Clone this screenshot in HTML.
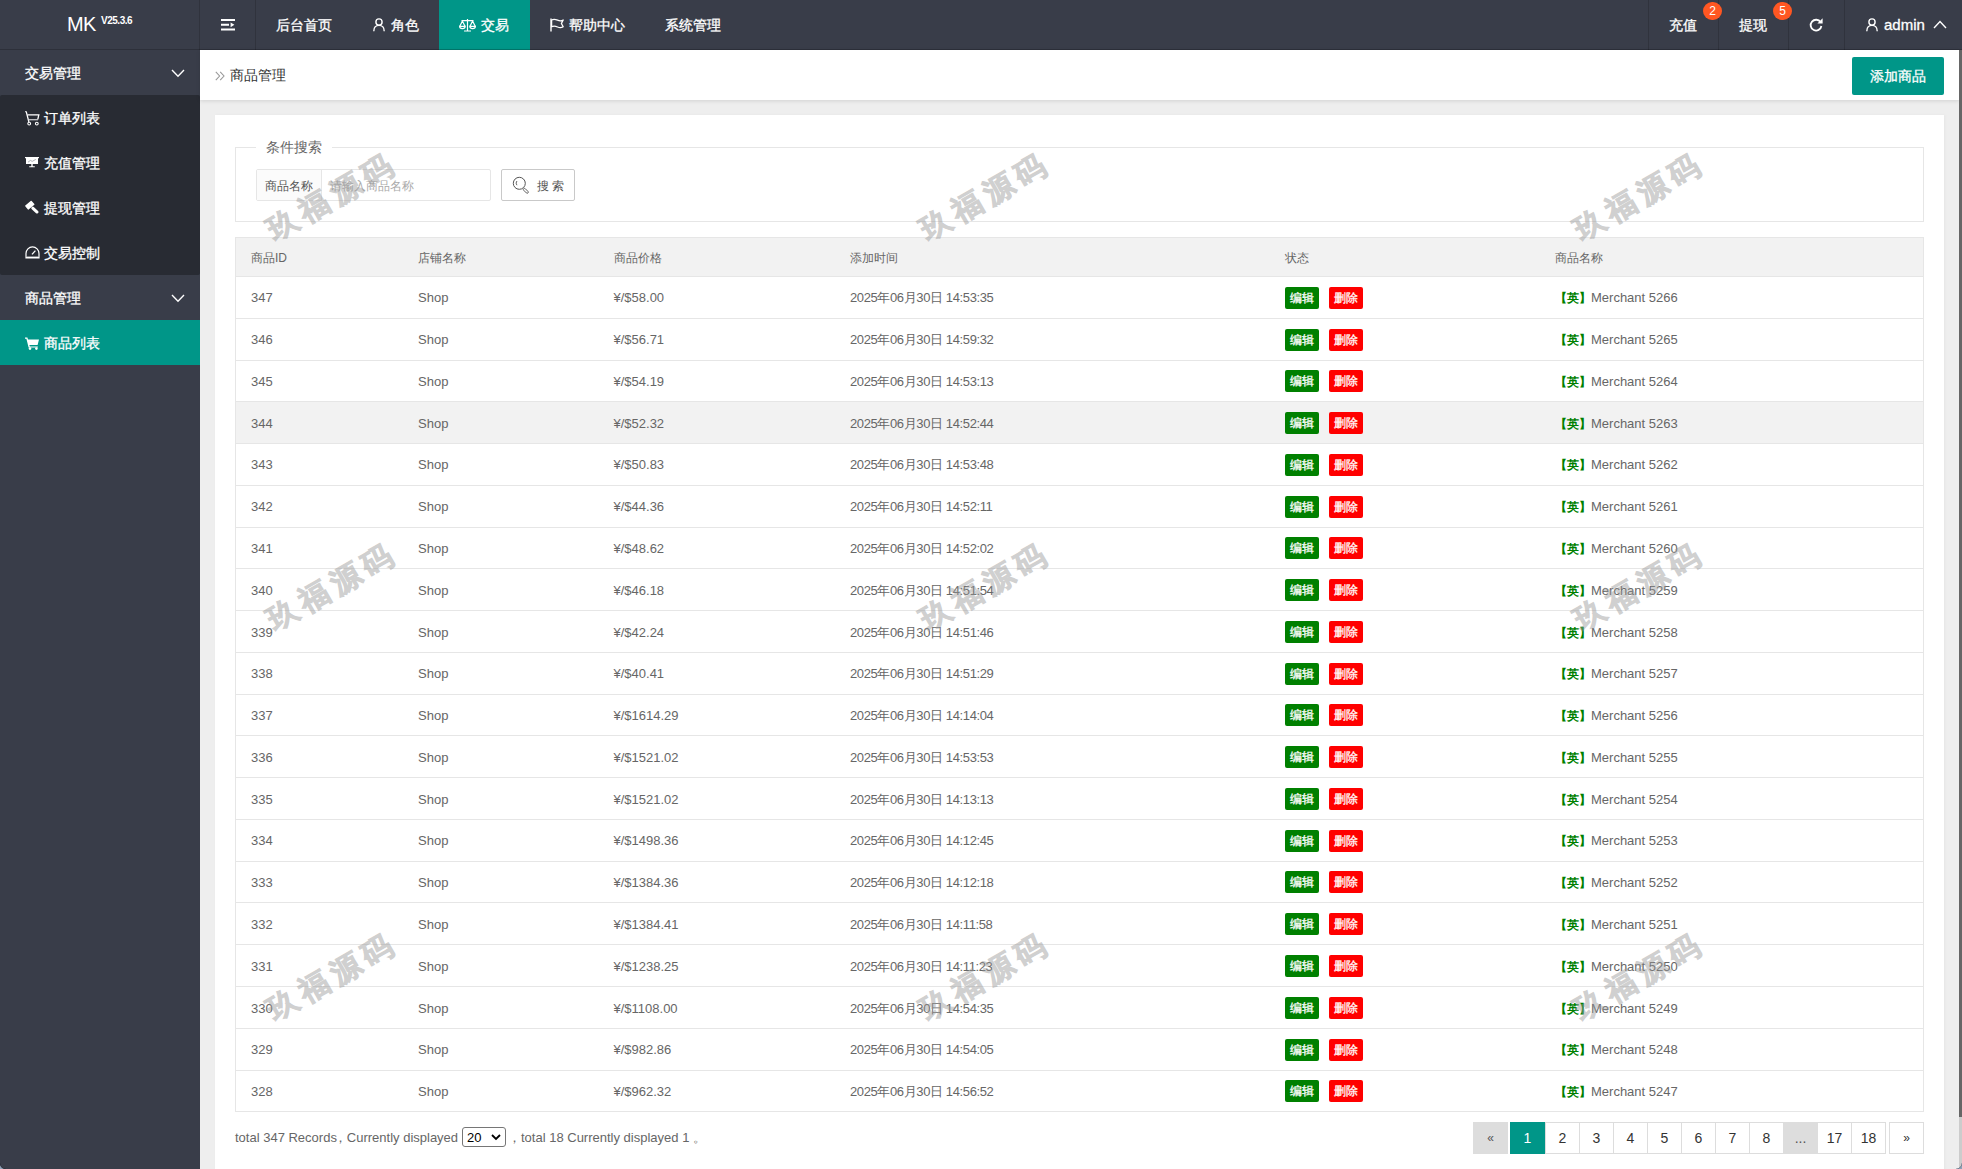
<!DOCTYPE html>
<html lang="zh"><head><meta charset="utf-8"><title>商品管理</title>
<style>
*{box-sizing:border-box;margin:0;padding:0}
html,body{width:1962px;height:1169px;overflow:hidden}
body{position:relative;background:#eeeeee;font-family:"Liberation Sans",sans-serif;font-size:14px;color:#666;-webkit-font-smoothing:antialiased}
i,em,b,u{font-style:normal;font-weight:normal;text-decoration:none}
.abs{position:absolute}
#hdr{position:absolute;left:0;top:0;width:1962px;height:50px;background:#393d49}
#side{position:absolute;left:0;top:50px;width:200px;height:1119px;background:#393d49}
.sep{position:absolute;top:0;width:1px;height:50px;background:#30333d}
.nav{position:absolute;top:0;height:50px;line-height:50px;color:#fff;font-size:14px;white-space:nowrap;-webkit-text-stroke:.3px #fff}
.nav svg{position:absolute}
#logo{position:absolute;left:0;top:0;width:200px;height:50px;color:#fff}
#logo .mk{position:absolute;left:67px;top:11px;font-size:20px;line-height:26px;letter-spacing:-0.6px}
#logo .ver{position:absolute;left:101px;top:15px;font-size:10px;line-height:12px;font-weight:bold;letter-spacing:-0.480px}
.badge{position:absolute;width:19px;height:18px;border-radius:9px;background:#ff5722;color:#fff;font-size:12px;line-height:18px;text-align:center}
.sitem{position:absolute;left:0;width:200px;height:45px;line-height:45px;color:#fff;font-size:14px;white-space:nowrap;-webkit-text-stroke:.3px #fff}
.sitem span{position:absolute;top:1px}
.sitem svg{position:absolute}
#child{position:absolute;left:0;top:45px;width:200px;height:180px;background:#282b33;border-radius:2px}
#crumb{position:absolute;left:200px;top:50px;width:1759px;height:50px;background:#fff;box-shadow:0 1px 4px rgba(0,0,0,.12)}
#card{position:absolute;left:215px;top:115px;width:1729px;height:1060px;background:#fff;box-shadow:1px 0 3px rgba(0,0,0,.04)}
#addbtn{position:absolute;left:1852px;top:57px;width:92px;height:38px;border-radius:2px;background:#009688;color:#fff;font-size:14px;line-height:38px;text-align:center;-webkit-text-stroke:.3px #fff}
#fs{position:absolute;left:235px;top:147px;width:1689px;height:75px;border:1px solid #e6e6e6}
#lg{position:absolute;left:256px;top:137px;width:76px;height:20px;background:#fff;font-size:14px;line-height:20px;color:#666;padding-left:10px}
#ig{position:absolute;left:256px;top:169px;width:235px;height:32px;border:1px solid #e6e6e6;border-radius:2px;background:#fff}
#igl{position:absolute;left:0;top:0;width:65px;height:30px;background:#fbfbfb;border-right:1px solid #e6e6e6;font-size:12px;line-height:32px;text-align:center;color:#555}
#igp{position:absolute;left:73px;top:1px;height:30px;line-height:30px;font-size:12px;color:#aaa}
#sbtn{position:absolute;left:501px;top:169px;width:74px;height:32px;border:1px solid #c9c9c9;border-radius:2px;background:#fff;font-size:12px;line-height:30px;color:#555}
#thead{position:absolute;left:235px;top:237px;width:1689px;height:40px;background:#f2f2f2;border:1px solid #e6e6e6;font-size:12px;color:#666}
#thead span{position:absolute;top:1px;line-height:38px;white-space:nowrap}
#tl,#tr{position:absolute;top:237px;width:1px;height:875px;background:#e6e6e6}
#tl{left:235px}#tr{left:1923px}
.tr{position:absolute;left:236px;width:1687px;border-bottom:1px solid #e6e6e6;font-size:13px;color:#666;white-space:nowrap}
.tr.hov{background:#f2f2f2}
.ln{position:absolute;left:0;width:100%;height:20px}.c{position:absolute;top:0;height:20px;line-height:20px}
.c1{left:15px}.c2{left:182px}.c3{left:377.5px}.c4{left:614px}.c5{left:1049px}.c6{left:1319px}
.c4{letter-spacing:-0.38px}.c4 i{display:inline-block;width:12.620px;white-space:nowrap;font-size:13px;line-height:1}
.be,.bd{position:absolute;top:-1px;width:34px;height:22px;border-radius:2px;color:#fff;font-size:12px;line-height:22px;text-align:center;-webkit-text-stroke:.3px #fff}
.be{background:#008000;left:0}
.bd{background:#ff0000;left:44px}
.c6 em{display:inline-block;width:36px;white-space:nowrap;color:#008000;font-size:12px;font-weight:bold;line-height:1}
#pinfo span{position:absolute;top:0}#pinfo{position:absolute;left:235px;top:1128px;height:20px;line-height:20px;font-size:13px;color:#666;white-space:nowrap}
#sel{position:absolute;left:462px;top:1127px;width:44px;height:20px;border:1px solid #767676;border-radius:3px;background:#fff;font-size:13px;color:#000;line-height:20px;padding-left:4px}
.pg{position:absolute;top:1122px;height:32px;border:1px solid #ddd;background:#fff;color:#333;font-size:14px;line-height:30px;text-align:center}
.wm{position:absolute;width:200px;height:40px;margin-left:-100px;margin-top:-20px;line-height:40px;text-align:center;font-size:30px;font-weight:bold;color:#999;-webkit-text-stroke:.9px #999;opacity:.45;letter-spacing:6px;text-indent:6px;transform:rotate(-30deg);white-space:nowrap;pointer-events:none}
#sb{position:absolute;left:1959px;top:50px;width:3px;height:1119px;background:#ccc}
#sbt{position:absolute;left:1959px;top:50px;width:3px;height:1067px;background:#666}

</style></head><body>
<div id="hdr">
  <div id="logo"><span class="mk">MK</span><span class="ver">V25.3.6</span></div>
  <div class="sep" style="left:199px"></div>
  <div class="sep" style="left:255px"></div>
  <div class="sep" style="left:1648px"></div>
  <div class="sep" style="left:1718px"></div>
  <div class="sep" style="left:1788px"></div>
  <div class="sep" style="left:1844px"></div>
  <svg class="abs" style="left:221px;top:19px" width="14" height="12" viewBox="0 0 14 12"><path d="M0 0h14v2H0zM0 4.800h8v2H0zM0 9.500h14v2H0zM9.600 3.400L13.400 5.800l-3.800 2.400z" fill="#fff"/></svg>
  <div class="nav" style="left:276px">后台首页</div>
  <div class="nav" style="left:391px"><svg style="left:-18px;top:18px" width="12" height="14" viewBox="0 0 12 14"><circle cx="6" cy="4" r="3.1" fill="none" stroke="#fff" stroke-width="1.4"/><path d="M0.8 13.2C0.8 9.6 3 7.4 6 7.4s5.2 2.2 5.2 5.8" fill="none" stroke="#fff" stroke-width="1.4"/></svg>角色</div>
  <div class="abs" style="left:439px;top:0;width:91px;height:50px;background:#009688"></div>
  <div class="nav" style="left:481px"><svg style="left:-22px;top:18px" width="17" height="14" viewBox="0 0 17 14"><g fill="none" stroke="#fff" stroke-width="1.2"><path d="M8.5 1v11.5M5 13h7M2.5 2.6h12"/><path d="M0.8 8.2L3.4 3l2.6 5.2M11 8.2L13.6 3l2.6 5.2"/><path d="M0.6 8.3a2.8 2.3 0 0 0 5.6 0zM10.8 8.3a2.8 2.3 0 0 0 5.6 0z"/></g></svg>交易</div>
  <div class="nav" style="left:569px"><svg style="left:-19px;top:18px" width="15" height="14" viewBox="0 0 15 14"><path d="M1 0.5v13" stroke="#fff" stroke-width="1.4" fill="none"/><path d="M1.6 2c2.2-1.2 4.2-.6 6 .2s3.600 1 5.600-.2L11.400 5.500l1.800 3.300c-2 1.200-3.800 1-5.600.2s-3.800-1.400-6-.2z" fill="none" stroke="#fff" stroke-width="1.3" stroke-linejoin="round"/></svg>帮助中心</div>
  <div class="nav" style="left:665px">系统管理</div>
  <div class="nav" style="left:1669px">充值</div>
  <div class="badge" style="left:1703px;top:2px">2</div>
  <div class="nav" style="left:1739px">提现</div>
  <div class="badge" style="left:1773px;top:2px">5</div>
  <svg class="abs" style="left:1808px;top:17px" width="16" height="16" viewBox="0 0 16 16"><path d="M12.6 5.2A5.4 5.4 0 1 0 13.400 9" fill="none" stroke="#fff" stroke-width="1.8"/><path d="M14.600 1.200v5.200H9.400z" fill="#fff"/></svg>
  <svg class="abs" style="left:1866px;top:18px" width="12" height="14" viewBox="0 0 12 14"><circle cx="6" cy="4" r="3.1" fill="none" stroke="#fff" stroke-width="1.4"/><path d="M0.8 13.2C0.8 9.6 3 7.4 6 7.4s5.2 2.2 5.2 5.8" fill="none" stroke="#fff" stroke-width="1.4"/></svg>
  <div class="nav" style="left:1884px;font-size:15px">admin</div>
  <svg class="abs" style="left:1933px;top:20px" width="14" height="9" viewBox="0 0 14 9"><path d="M1 8L7 1.600L13 8" fill="none" stroke="#fff" stroke-width="1.4"/></svg>
  <div class="abs" style="left:0;top:49px;width:1962px;height:1px;background:rgba(0,0,0,.2)"></div>
</div>
<div id="side">
  <div class="sitem" style="top:0"><span style="left:25px">交易管理</span><svg style="left:171px;top:19px" width="14" height="9" viewBox="0 0 14 9"><path d="M1 1l6 6.200L13 1" fill="none" stroke="#fff" stroke-width="1.4"/></svg></div>
  <div id="child"></div>
  <div class="sitem" style="top:45px"><svg style="left:25px;top:16px" width="15" height="15" viewBox="0 0 15 15"><path d="M0.300 0.500L1.300 0.900L3.900 11" fill="none" stroke="#fff" stroke-width="1.300"/><path d="M2.400 3.900H13.800L12.800 8.400" fill="none" stroke="#fff" stroke-width="1.300"/><path d="M3.600 8.700H13" fill="none" stroke="#c4c6ca" stroke-width="1.300"/><circle cx="4.200" cy="12.600" r="1.400" fill="#282b33" stroke="#fff" stroke-width="1.100"/><circle cx="11.800" cy="12.600" r="1.400" fill="#282b33" stroke="#fff" stroke-width="1.100"/></svg><span style="left:44px">订单列表</span></div>
  <div class="sitem" style="top:90px"><svg style="left:25px;top:16px" width="14" height="12" viewBox="0 0 14 12"><path d="M0 1h14v1.200H0zM1 2.200h12v5.800H1zM6.300 8h1.400v2.200H6.300zM4.200 10.200h5.600v1H4.200z" fill="#fff"/><path d="M3 6.200l2.400-1.800 1.800 1 3.600-2" fill="none" stroke="#9a9ca3" stroke-width=".8"/></svg><span style="left:44px">充值管理</span></div>
  <div class="sitem" style="top:135px"><svg style="left:24px;top:15px" width="16" height="16" viewBox="0 0 16 16"><g fill="#fff"><rect x="1.600" y="2.600" width="8.400" height="5.200" rx=".5" transform="rotate(-40 5.800 5.200)"/><rect x="6.600" y="8.600" width="8.600" height="3" rx="1.400" transform="rotate(42 10.900 10.100)"/></g></svg><span style="left:44px">提现管理</span></div>
  <div class="sitem" style="top:180px"><svg style="left:25px;top:16px" width="15" height="13" viewBox="0 0 15 13"><path d="M1 10.800V7.400A6.500 6.500 0 0 1 14 7.400V10.800" fill="none" stroke="#fff" stroke-width="1.200"/><path d="M0.400 10.600h14.200v1.900H0.400z" fill="#fff"/><path d="M7 8.400L10.400 4.600" fill="none" stroke="#fff" stroke-width="1.300"/></svg><span style="left:44px">交易控制</span></div>
  <div class="sitem" style="top:225px"><span style="left:25px">商品管理</span><svg style="left:171px;top:19px" width="14" height="9" viewBox="0 0 14 9"><path d="M1 1l6 6.200L13 1" fill="none" stroke="#fff" stroke-width="1.400"/></svg></div>
  <div class="sitem" style="top:270px;background:#009688"><svg style="left:25px;top:17px" width="14" height="13" viewBox="0 0 14 13"><path d="M0 0.600h2.400l.6 2h11l-1.400 5.400H4.400l.4 1.400h8v1.200H3.600L1.400 1.800H0z" fill="#fff"/><circle cx="5" cy="11.600" r="1.300" fill="#fff"/><circle cx="11.400" cy="11.600" r="1.300" fill="#fff"/></svg><span style="left:43.500px">商品列表</span></div>
</div>
<div id="crumb">
  <svg class="abs" style="left:15px;top:21px" width="10" height="10" viewBox="0 0 10 10"><path d="M0.800 0.800L4.600 5L0.800 9.200M5.200 0.800L9 5L5.200 9.200" fill="none" stroke="#999" stroke-width="1.100"/></svg>
  <span class="abs" style="left:30px;top:0;line-height:50px;font-size:14px;color:#333">商品管理</span>
</div>
<div id="addbtn">添加商品</div>
<div id="card"></div>
<div id="fs"></div>
<div id="lg">条件搜索</div>
<div id="ig"><div id="igl">商品名称</div><div id="igp">请输入商品名称</div></div>
<div id="sbtn"><svg class="abs" style="left:10px;top:6px" width="18" height="18" viewBox="0 0 18 18"><circle cx="7.300" cy="7.300" r="6" fill="none" stroke="#555" stroke-width="1"/><rect x="11.700" y="11.600" width="6" height="2.200" rx="1.100" transform="rotate(45 11.700 12.700)" fill="#fff" stroke="#555" stroke-width=".9"/><path d="M4.900 5A3.400 3.400 0 0 0 4.900 9.200" stroke="#555" stroke-width=".9" fill="none"/></svg><span class="abs" style="left:34.500px;top:1px">搜 索</span></div>
<div id="thead"><span style="left:15px">商品ID</span><span style="left:182px">店铺名称</span><span style="left:377.500px">商品价格</span><span style="left:614px">添加时间</span><span style="left:1049px">状态</span><span style="left:1319px">商品名称</span></div>
<div id="tl"></div><div id="tr"></div>

<div class="tr" style="top:277px;height:42px"><div class="ln" style="top:11px"><span class="c c1">347</span><span class="c c2">Shop</span><span class="c c3">¥/$58.00</span><span class="c c4">2025<i>年</i>06<i>月</i>30<i>日</i> 14:53:35</span><span class="c c5"><b class="be" style="top:-1px">编辑</b><b class="bd" style="top:-1px">删除</b></span><span class="c c6"><em>【英】</em>Merchant 5266</span></div></div>
<div class="tr" style="top:319px;height:42px"><div class="ln" style="top:11px"><span class="c c1">346</span><span class="c c2">Shop</span><span class="c c3">¥/$56.71</span><span class="c c4">2025<i>年</i>06<i>月</i>30<i>日</i> 14:59:32</span><span class="c c5"><b class="be" style="top:-1px">编辑</b><b class="bd" style="top:-1px">删除</b></span><span class="c c6"><em>【英】</em>Merchant 5265</span></div></div>
<div class="tr" style="top:361px;height:41px"><div class="ln" style="top:11px"><span class="c c1">345</span><span class="c c2">Shop</span><span class="c c3">¥/$54.19</span><span class="c c4">2025<i>年</i>06<i>月</i>30<i>日</i> 14:53:13</span><span class="c c5"><b class="be" style="top:-2px">编辑</b><b class="bd" style="top:-2px">删除</b></span><span class="c c6"><em>【英】</em>Merchant 5264</span></div></div>
<div class="tr hov" style="top:402px;height:42px"><div class="ln" style="top:12px"><span class="c c1">344</span><span class="c c2">Shop</span><span class="c c3">¥/$52.32</span><span class="c c4">2025<i>年</i>06<i>月</i>30<i>日</i> 14:52:44</span><span class="c c5"><b class="be" style="top:-2px">编辑</b><b class="bd" style="top:-2px">删除</b></span><span class="c c6"><em>【英】</em>Merchant 5263</span></div></div>
<div class="tr" style="top:444px;height:42px"><div class="ln" style="top:11px"><span class="c c1">343</span><span class="c c2">Shop</span><span class="c c3">¥/$50.83</span><span class="c c4">2025<i>年</i>06<i>月</i>30<i>日</i> 14:53:48</span><span class="c c5"><b class="be" style="top:-1px">编辑</b><b class="bd" style="top:-1px">删除</b></span><span class="c c6"><em>【英】</em>Merchant 5262</span></div></div>
<div class="tr" style="top:486px;height:42px"><div class="ln" style="top:11px"><span class="c c1">342</span><span class="c c2">Shop</span><span class="c c3">¥/$44.36</span><span class="c c4">2025<i>年</i>06<i>月</i>30<i>日</i> 14:52:11</span><span class="c c5"><b class="be" style="top:-1px">编辑</b><b class="bd" style="top:-1px">删除</b></span><span class="c c6"><em>【英】</em>Merchant 5261</span></div></div>
<div class="tr" style="top:528px;height:41px"><div class="ln" style="top:11px"><span class="c c1">341</span><span class="c c2">Shop</span><span class="c c3">¥/$48.62</span><span class="c c4">2025<i>年</i>06<i>月</i>30<i>日</i> 14:52:02</span><span class="c c5"><b class="be" style="top:-2px">编辑</b><b class="bd" style="top:-2px">删除</b></span><span class="c c6"><em>【英】</em>Merchant 5260</span></div></div>
<div class="tr" style="top:569px;height:42px"><div class="ln" style="top:12px"><span class="c c1">340</span><span class="c c2">Shop</span><span class="c c3">¥/$46.18</span><span class="c c4">2025<i>年</i>06<i>月</i>30<i>日</i> 14:51:54</span><span class="c c5"><b class="be" style="top:-2px">编辑</b><b class="bd" style="top:-2px">删除</b></span><span class="c c6"><em>【英】</em>Merchant 5259</span></div></div>
<div class="tr" style="top:611px;height:42px"><div class="ln" style="top:12px"><span class="c c1">339</span><span class="c c2">Shop</span><span class="c c3">¥/$42.24</span><span class="c c4">2025<i>年</i>06<i>月</i>30<i>日</i> 14:51:46</span><span class="c c5"><b class="be" style="top:-2px">编辑</b><b class="bd" style="top:-2px">删除</b></span><span class="c c6"><em>【英】</em>Merchant 5258</span></div></div>
<div class="tr" style="top:653px;height:42px"><div class="ln" style="top:11px"><span class="c c1">338</span><span class="c c2">Shop</span><span class="c c3">¥/$40.41</span><span class="c c4">2025<i>年</i>06<i>月</i>30<i>日</i> 14:51:29</span><span class="c c5"><b class="be" style="top:-1px">编辑</b><b class="bd" style="top:-1px">删除</b></span><span class="c c6"><em>【英】</em>Merchant 5257</span></div></div>
<div class="tr" style="top:695px;height:41px"><div class="ln" style="top:11px"><span class="c c1">337</span><span class="c c2">Shop</span><span class="c c3">¥/$1614.29</span><span class="c c4">2025<i>年</i>06<i>月</i>30<i>日</i> 14:14:04</span><span class="c c5"><b class="be" style="top:-2px">编辑</b><b class="bd" style="top:-2px">删除</b></span><span class="c c6"><em>【英】</em>Merchant 5256</span></div></div>
<div class="tr" style="top:736px;height:42px"><div class="ln" style="top:12px"><span class="c c1">336</span><span class="c c2">Shop</span><span class="c c3">¥/$1521.02</span><span class="c c4">2025<i>年</i>06<i>月</i>30<i>日</i> 14:53:53</span><span class="c c5"><b class="be" style="top:-2px">编辑</b><b class="bd" style="top:-2px">删除</b></span><span class="c c6"><em>【英】</em>Merchant 5255</span></div></div>
<div class="tr" style="top:778px;height:42px"><div class="ln" style="top:12px"><span class="c c1">335</span><span class="c c2">Shop</span><span class="c c3">¥/$1521.02</span><span class="c c4">2025<i>年</i>06<i>月</i>30<i>日</i> 14:13:13</span><span class="c c5"><b class="be" style="top:-2px">编辑</b><b class="bd" style="top:-2px">删除</b></span><span class="c c6"><em>【英】</em>Merchant 5254</span></div></div>
<div class="tr" style="top:820px;height:42px"><div class="ln" style="top:11px"><span class="c c1">334</span><span class="c c2">Shop</span><span class="c c3">¥/$1498.36</span><span class="c c4">2025<i>年</i>06<i>月</i>30<i>日</i> 14:12:45</span><span class="c c5"><b class="be" style="top:-1px">编辑</b><b class="bd" style="top:-1px">删除</b></span><span class="c c6"><em>【英】</em>Merchant 5253</span></div></div>
<div class="tr" style="top:862px;height:41px"><div class="ln" style="top:11px"><span class="c c1">333</span><span class="c c2">Shop</span><span class="c c3">¥/$1384.36</span><span class="c c4">2025<i>年</i>06<i>月</i>30<i>日</i> 14:12:18</span><span class="c c5"><b class="be" style="top:-2px">编辑</b><b class="bd" style="top:-2px">删除</b></span><span class="c c6"><em>【英】</em>Merchant 5252</span></div></div>
<div class="tr" style="top:903px;height:42px"><div class="ln" style="top:12px"><span class="c c1">332</span><span class="c c2">Shop</span><span class="c c3">¥/$1384.41</span><span class="c c4">2025<i>年</i>06<i>月</i>30<i>日</i> 14:11:58</span><span class="c c5"><b class="be" style="top:-2px">编辑</b><b class="bd" style="top:-2px">删除</b></span><span class="c c6"><em>【英】</em>Merchant 5251</span></div></div>
<div class="tr" style="top:945px;height:42px"><div class="ln" style="top:12px"><span class="c c1">331</span><span class="c c2">Shop</span><span class="c c3">¥/$1238.25</span><span class="c c4">2025<i>年</i>06<i>月</i>30<i>日</i> 14:11:23</span><span class="c c5"><b class="be" style="top:-2px">编辑</b><b class="bd" style="top:-2px">删除</b></span><span class="c c6"><em>【英】</em>Merchant 5250</span></div></div>
<div class="tr" style="top:987px;height:42px"><div class="ln" style="top:12px"><span class="c c1">330</span><span class="c c2">Shop</span><span class="c c3">¥/$1108.00</span><span class="c c4">2025<i>年</i>06<i>月</i>30<i>日</i> 14:54:35</span><span class="c c5"><b class="be" style="top:-2px">编辑</b><b class="bd" style="top:-2px">删除</b></span><span class="c c6"><em>【英】</em>Merchant 5249</span></div></div>
<div class="tr" style="top:1029px;height:42px"><div class="ln" style="top:11px"><span class="c c1">329</span><span class="c c2">Shop</span><span class="c c3">¥/$982.86</span><span class="c c4">2025<i>年</i>06<i>月</i>30<i>日</i> 14:54:05</span><span class="c c5"><b class="be" style="top:-1px">编辑</b><b class="bd" style="top:-1px">删除</b></span><span class="c c6"><em>【英】</em>Merchant 5248</span></div></div>
<div class="tr" style="top:1071px;height:41px"><div class="ln" style="top:11px"><span class="c c1">328</span><span class="c c2">Shop</span><span class="c c3">¥/$962.32</span><span class="c c4">2025<i>年</i>06<i>月</i>30<i>日</i> 14:56:52</span><span class="c c5"><b class="be" style="top:-2px">编辑</b><b class="bd" style="top:-2px">删除</b></span><span class="c c6"><em>【英】</em>Merchant 5247</span></div></div>
<div id="pinfo"><span style="left:0">total 347 Records</span><span style="left:98.5px">，</span><span style="left:111.800px">Currently displayed</span><span style="left:273px">，total 18 Currently displayed 1 。</span></div>
<div id="sel">20<svg class="abs" style="left:28px;top:6px" width="10" height="7" viewBox="0 0 10 7"><path d="M1 1l4 4 4-4" fill="none" stroke="#000" stroke-width="1.800"/></svg></div>
<div class="pg" style="left:1473px;width:35px;background:#ddd;color:#555;font-size:12px">«</div>
<div class="pg" style="left:1510px;width:35px;background:#009688;border-color:#009688;color:#fff">1</div>
<div class="pg" style="left:1545px;width:35px">2</div>
<div class="pg" style="left:1579px;width:35px">3</div>
<div class="pg" style="left:1613px;width:35px">4</div>
<div class="pg" style="left:1647px;width:35px">5</div>
<div class="pg" style="left:1681px;width:35px">6</div>
<div class="pg" style="left:1715px;width:35px">7</div>
<div class="pg" style="left:1749px;width:35px">8</div>
<div class="pg" style="left:1783px;width:35px;background:#ddd;color:#555">...</div>
<div class="pg" style="left:1817px;width:35px">17</div>
<div class="pg" style="left:1851px;width:35px">18</div>
<div class="pg" style="left:1889px;width:35px;font-size:12px">»</div>
<div class="wm" style="left:330px;top:198px">玖福源码</div>
<div class="wm" style="left:983px;top:198px">玖福源码</div>
<div class="wm" style="left:1637px;top:198px">玖福源码</div>
<div class="wm" style="left:330px;top:588px">玖福源码</div>
<div class="wm" style="left:983px;top:588px">玖福源码</div>
<div class="wm" style="left:1637px;top:588px">玖福源码</div>
<div class="wm" style="left:330px;top:978px">玖福源码</div>
<div class="wm" style="left:983px;top:978px">玖福源码</div>
<div class="wm" style="left:1637px;top:978px">玖福源码</div>
<div id="sb"></div><div id="sbt"></div>
<div class="abs" style="left:0;top:1163px;width:6px;height:6px;background:radial-gradient(circle at 100% 0,rgba(0,0,0,0) 5.200px,#2c303a 5.900px,#8fa2b8 6.700px)"></div>
<div class="abs" style="left:1956px;top:1163px;width:6px;height:6px;background:radial-gradient(circle at 0 0,rgba(0,0,0,0) 5.200px,#6f7d8f 5.900px,#8fa2b8 6.700px)"></div>

</body></html>
